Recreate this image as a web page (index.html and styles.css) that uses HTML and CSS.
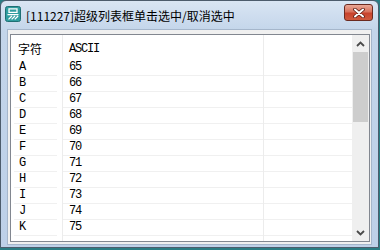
FILE: index.html
```html
<!DOCTYPE html>
<html lang="zh">
<head>
    <meta charset="UTF-8">
    <title>超级列表框</title>
    <link rel="stylesheet" href="styles.css">
</head>
<body>
<div class="window">
    <div class="titlebar">
        <svg class="app-icon" width="16" height="16" viewBox="0 0 16 16">
            <rect x="0.5" y="0.5" width="15" height="15" rx="2" fill="#2f9d9f" stroke="#1f6f74"/>
            <path d="M4 2.8h8v3.6H4z" fill="none" stroke="#fff" stroke-width="1.3"/>
            <path d="M2.5 8.6h11M3.5 13.4l3.4-3.4M6.6 13.4l3.4-3.4M9.7 13.4l3.4-3.4" stroke="#fff" stroke-width="1.3"/>
        </svg>
        <span class="title">[111227]超级列表框单击选中/取消选中</span>
        <div class="close-btn">
            <svg width="12" height="10" viewBox="0 0 12 10">
                <path d="M2 1.5l8 7M10 1.5l-8 7" stroke="#5a1a12" stroke-width="3.6" stroke-linecap="round"/>
                <path d="M2 1.5l8 7M10 1.5l-8 7" stroke="#fff" stroke-width="2" stroke-linecap="round"/>
            </svg>
        </div>
    </div>

    <div class="client">
        <div class="listview">
            <div class="list">
                <div class="cell col1 head"><span class="cjk">字符</span></div>
                <div class="cell col2 head">ASCII</div>
                <div class="cell col3 head"></div>

                <div class="cell col1"><div class="line">A</div></div>
                <div class="cell col2"><div class="line">65</div></div>
                <div class="cell col3"><div class="line"></div></div>

                <div class="cell col1"><div class="line">B</div></div>
                <div class="cell col2"><div class="line">66</div></div>
                <div class="cell col3"><div class="line"></div></div>

                <div class="cell col1"><div class="line">C</div></div>
                <div class="cell col2"><div class="line">67</div></div>
                <div class="cell col3"><div class="line"></div></div>

                <div class="cell col1"><div class="line">D</div></div>
                <div class="cell col2"><div class="line">68</div></div>
                <div class="cell col3"><div class="line"></div></div>

                <div class="cell col1"><div class="line">E</div></div>
                <div class="cell col2"><div class="line">69</div></div>
                <div class="cell col3"><div class="line"></div></div>

                <div class="cell col1"><div class="line">F</div></div>
                <div class="cell col2"><div class="line">70</div></div>
                <div class="cell col3"><div class="line"></div></div>

                <div class="cell col1"><div class="line">G</div></div>
                <div class="cell col2"><div class="line">71</div></div>
                <div class="cell col3"><div class="line"></div></div>

                <div class="cell col1"><div class="line">H</div></div>
                <div class="cell col2"><div class="line">72</div></div>
                <div class="cell col3"><div class="line"></div></div>

                <div class="cell col1"><div class="line">I</div></div>
                <div class="cell col2"><div class="line">73</div></div>
                <div class="cell col3"><div class="line"></div></div>

                <div class="cell col1"><div class="line">J</div></div>
                <div class="cell col2"><div class="line">74</div></div>
                <div class="cell col3"><div class="line"></div></div>

                <div class="cell col1"><div class="line">K</div></div>
                <div class="cell col2"><div class="line">75</div></div>
                <div class="cell col3"><div class="line"></div></div>

                <div class="cell col1"></div>
                <div class="cell col2"></div>
                <div class="cell col3"></div>
            </div>

            <div class="scrollbar">
                <div class="arrow">
                    <svg width="9" height="6" viewBox="0 0 9 6"><path d="M1 5l3.5-3.5L8 5" fill="none" stroke="#4a4a4a" stroke-width="1.8"/></svg>
                </div>
                <div class="thumb"></div>
                <div class="track"></div>
                <div class="arrow">
                    <svg width="9" height="6" viewBox="0 0 9 6"><path d="M1 1l3.5 3.5L8 1" fill="none" stroke="#4a4a4a" stroke-width="1.8"/></svg>
                </div>
            </div>
        </div>
    </div>
</div>
</body>
</html>
```

FILE: styles.css
```css
body {
    margin: 0;
    width: 380px;
    height: 250px;
    background-color: #2a7d84;
    overflow: hidden;
}
.window {
    width: 379px;
    height: 248px;
    box-sizing: border-box;
    border: 1px solid #4d5c6c;
    border-radius: 6px 6px 0 0;
    background: linear-gradient(#d9e5f3, #c3d5ea 30px, #bdd0e8);
    display: flex;
    flex-direction: column;
}
.titlebar {
    height: 28px;
    display: flex;
    align-items: center;
    padding-left: 4px;
}
.app-icon {
    margin-top: -2px;
    flex-shrink: 0;
}
.title {
    margin-left: 5px;
    font-family: "Noto Sans CJK SC", sans-serif;
    font-size: 12px;
    color: #000;
    flex: 1;
    margin-top: 1px;
}
.close-btn {
    width: 29px;
    height: 17px;
    box-sizing: border-box;
    margin-right: 5px;
    margin-top: -5px;
    border: 1px solid #6b2a20;
    border-radius: 3px;
    background: linear-gradient(#eba896, #d8725d 45%, #c8422c 55%, #cf5a3e);
    display: flex;
    align-items: center;
    justify-content: center;
}
.client {
    margin: 0 6px 2px 6px;
    height: 216px;
    box-sizing: border-box;
    border: 1px solid #a5b6cb;
    background-color: #f0f0f0;
    padding: 4px 1px 2px 2px;
}
.listview {
    height: 208px;
    box-sizing: border-box;
    border: 1px solid #828790;
    background-color: #fff;
    display: flex;
}
.list {
    flex: 1;
    display: grid;
    grid-template-columns: 52px 201px 1fr;
    grid-template-rows: 25px repeat(11, 16px) 1fr;
    font-family: "Liberation Mono", monospace;
    font-size: 12px;
    letter-spacing: -1.2px;
    color: #000;
    overflow: hidden;
}
.cell {
    box-sizing: border-box;
}
.col1, .col2 {
    border-right: 1px solid #ececec;
}
.col1 {
    padding: 0 5px 0 3px;
}
.head {
    display: flex;
    align-items: center;
    padding-top: 2px;
}
.col1.head {
    padding-left: 7px;
}
.col2.head {
    padding-left: 6px;
}
.cjk {
    font-family: "Noto Sans CJK SC", sans-serif;
    font-size: 12px;
    letter-spacing: 0;
}
.line {
    height: 16px;
    box-sizing: border-box;
    border-bottom: 1px solid #f0f0f0;
    line-height: 15px;
}
.col1 .line {
    padding-left: 5px;
}
.col2 .line {
    padding-left: 6px;
}
.scrollbar {
    width: 17px;
    display: flex;
    flex-direction: column;
    background-color: #efefef;
}
.arrow {
    height: 17px;
    display: flex;
    align-items: center;
    justify-content: center;
}
.thumb {
    height: 70px;
    background-color: #cdcdcd;
    margin: 0 1px;
}
.track {
    flex: 1;
}
```
